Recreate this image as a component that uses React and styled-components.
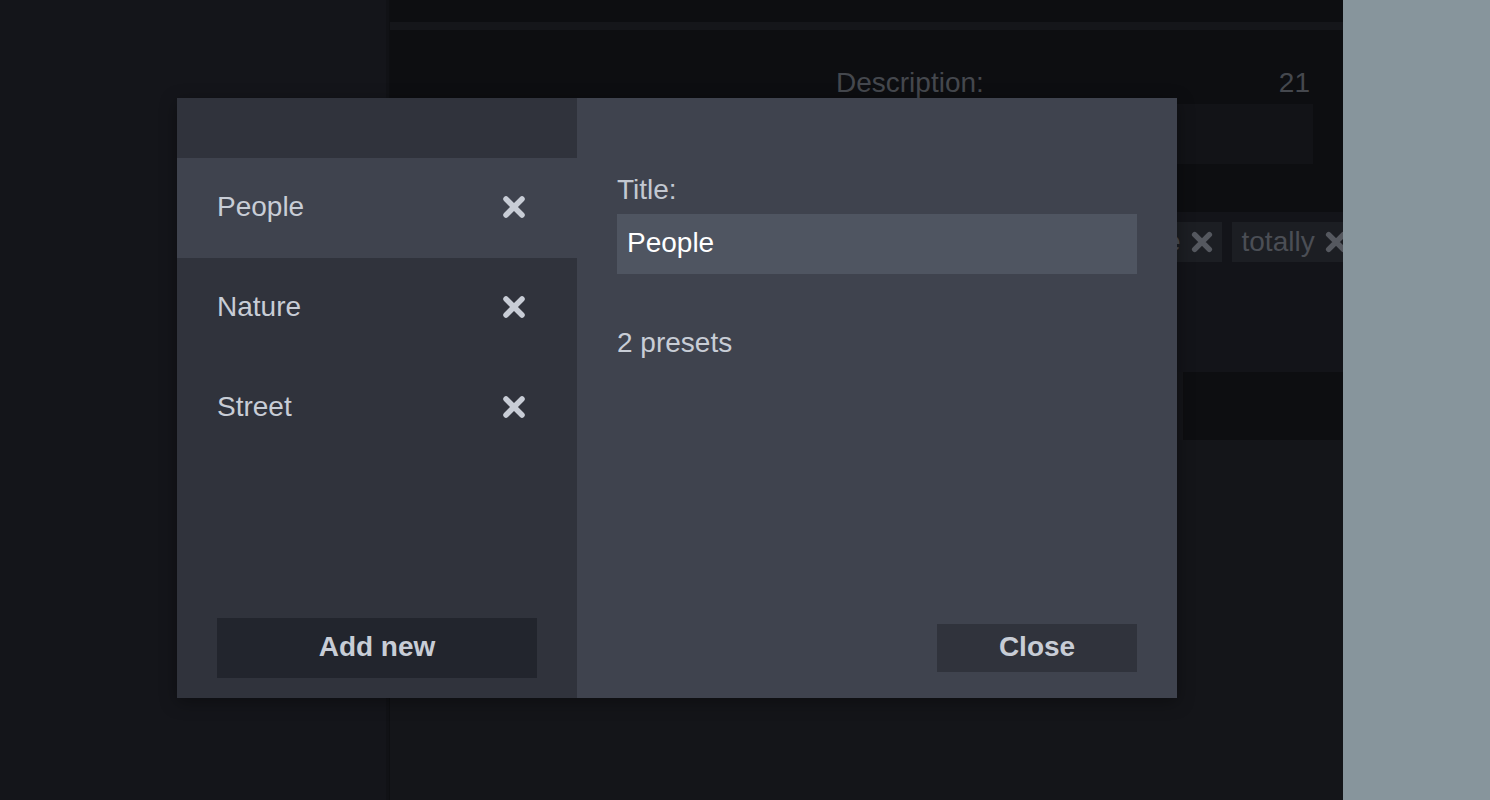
import React from "react";
import styled, { createGlobalStyle } from "styled-components";

const GlobalStyle = createGlobalStyle`
  html, body {
    margin: 0;
    padding: 0;
    width: 1490px;
    height: 800px;
    overflow: hidden;
    background: #14151a;
    font-family: "Liberation Sans", Arial, Helvetica, sans-serif;
  }
  * {
    box-sizing: border-box;
  }
`;

const categories = [
  { id: 1, title: "People", presets: 2 },
  { id: 2, title: "Nature", presets: 0 },
  { id: 3, title: "Street", presets: 0 },
];

const tags = ["landscape", "awesome", "totally"];

function CrossIcon({ size = 24, color = "#c8cdd6", weight = 5.5 }) {
  return (
    <svg width={size} height={size} viewBox="0 0 24 24">
      <path
        d="M4 4 L20 20 M20 4 L4 20"
        stroke={color}
        strokeWidth={weight}
        strokeLinecap="round"
        fill="none"
      />
    </svg>
  );
}

export default function App() {
  const selected = categories[0];

  return (
    <Page>
      <GlobalStyle />
      <Sidebar />
      <Divider />
      <Main>
        <TopBar />
        <Band />
        <Header>
          <LabelRow>
            <span>Description:</span>
            <span>21</span>
          </LabelRow>
          <GhostInput />
        </Header>
        <TagsPanel>
          {tags.map((tag) => (
            <Tag key={tag}>
              <span>{tag}</span>
              <CrossIcon size={22} color="#55585f" weight={6} />
            </Tag>
          ))}
        </TagsPanel>
        <DarkBox />
        <Rest />
      </Main>
      <Outside />

      <Modal>
        <ListPane>
          <ListHeader />
          <List>
            {categories.map((cat) => (
              <Row key={cat.id} active={cat.id === selected.id}>
                <span>{cat.title}</span>
                <RemoveButton>
                  <CrossIcon />
                </RemoveButton>
              </Row>
            ))}
          </List>
          <ListFooter>
            <AddButton>Add new</AddButton>
          </ListFooter>
        </ListPane>
        <DetailPane>
          <FieldLabel>Title:</FieldLabel>
          <TitleInput defaultValue={selected.title} />
          <Count>{selected.presets} presets</Count>
          <CloseButton>Close</CloseButton>
        </DetailPane>
      </Modal>
    </Page>
  );
}

const Page = styled.div`
  position: relative;
  display: flex;
  width: 1490px;
  height: 800px;
  overflow: hidden;
`;

const Sidebar = styled.div`
  width: 386px;
  background: #14151a;
`;

const Divider = styled.div`
  width: 4px;
  background: #111216;
  border-right: 1px solid #0e0f12;
`;

const Main = styled.div`
  width: 953px;
  display: flex;
  flex-direction: column;
  overflow: hidden;
  background: #141519;
`;

const TopBar = styled.div`
  height: 22px;
  background: #0d0e11;
`;

const Band = styled.div`
  height: 8px;
  background: #15161a;
`;

const Header = styled.div`
  height: 182px;
  padding: 37px 30px 0 446px;
  background: #0d0e11;
`;

const LabelRow = styled.div`
  display: flex;
  justify-content: space-between;
  padding-right: 3px;
  font-size: 28px;
  line-height: 32px;
  color: #45484e;
`;

const GhostInput = styled.div`
  margin-top: 5px;
  height: 60px;
  background: #121317;
`;

const TagsPanel = styled.div`
  height: 160px;
  display: flex;
  gap: 10px;
  align-items: flex-start;
  padding: 10px 0 0 472px;
  background: #131419;
  white-space: nowrap;
`;

const Tag = styled.div`
  flex: none;
  display: flex;
  align-items: center;
  gap: 10px;
  height: 40px;
  padding: 0 9px 0 10px;
  background: #1c1e23;
  color: #4b4e55;
  font-size: 28px;
  line-height: 32px;
`;

const DarkBox = styled.div`
  height: 68px;
  margin-left: 793px;
  background: #0d0e11;
`;

const Rest = styled.div`
  flex: 1;
  background: #141519;
`;

const Outside = styled.div`
  flex: 1;
  background: #87959c;
`;

const Modal = styled.div`
  position: absolute;
  top: 98px;
  left: 177px;
  width: 1000px;
  height: 600px;
  display: grid;
  grid-template-columns: 400px 600px;
  box-shadow: 0 4px 16px rgba(0, 0, 0, 0.35);
  color: #c8cdd6;
  font-size: 28px;
  line-height: 32px;
`;

const ListPane = styled.div`
  display: flex;
  flex-direction: column;
  background: #30333c;
`;

const ListHeader = styled.div`
  height: 60px;
`;

const List = styled.div`
  display: flex;
  flex-direction: column;
`;

const Row = styled.div`
  height: 100px;
  display: flex;
  align-items: center;
  justify-content: space-between;
  padding: 0 51px 2px 40px;
  background: ${(p) => (p.active ? "#3f434e" : "transparent")};
`;

const RemoveButton = styled.div`
  display: flex;
  width: 24px;
  height: 24px;
`;

const ListFooter = styled.div`
  margin-top: auto;
  padding: 0 40px 20px;
`;

const AddButton = styled.div`
  height: 60px;
  display: flex;
  align-items: center;
  justify-content: center;
  padding-bottom: 2px;
  background: #22252d;
  font-weight: 700;
  color: #c8cdd6;
`;

const DetailPane = styled.div`
  display: flex;
  flex-direction: column;
  padding: 76px 40px 26px;
  background: #3f434e;
`;

const FieldLabel = styled.div`
  color: #c3c8d1;
`;

const TitleInput = styled.input`
  margin-top: 8px;
  height: 60px;
  padding: 0 10px 2px;
  border: none;
  outline: none;
  background: #4f5561;
  color: #ffffff;
  font-family: inherit;
  font-size: 28px;
`;

const Count = styled.div`
  margin-top: 53px;
  color: #c8cdd6;
`;

const CloseButton = styled.div`
  margin-top: auto;
  align-self: flex-end;
  width: 200px;
  height: 48px;
  display: flex;
  align-items: center;
  justify-content: center;
  padding-bottom: 2px;
  background: #30333c;
  font-weight: 700;
  color: #c8cdd6;
`;
